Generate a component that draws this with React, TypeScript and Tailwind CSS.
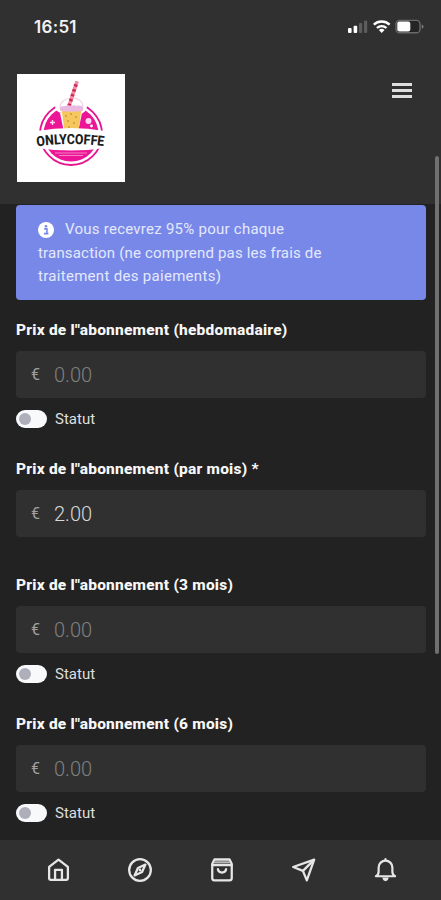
import React, { useState } from 'react';

interface Plan {
  id: string;
  label: string;
  price: string;
  hasStatus: boolean;
}

const plans: Plan[] = [
  { id: 'weekly', label: 'Prix de l"abonnement (hebdomadaire)', price: '', hasStatus: true },
  { id: 'monthly', label: 'Prix de l"abonnement (par mois) *', price: '2.00', hasStatus: false },
  { id: 'quarterly', label: 'Prix de l"abonnement (3 mois)', price: '', hasStatus: true },
  { id: 'biannually', label: 'Prix de l"abonnement (6 mois)', price: '', hasStatus: true },
];

const StatusBar: React.FC = () => (
  <div className="flex h-[54px] items-center justify-between pl-[34px] pr-[17px]">
    <span className="font-['Inter',sans-serif] text-[17px] font-semibold leading-6 tracking-[0.3px] text-[#f2f2f2]">16:51</span>
    <svg width="77" height="16" viewBox="0 0 77 16">
      <rect x="1" y="9" width="3.6" height="5" rx="1" fill="#fff" />
      <rect x="6.6" y="6.8" width="3.6" height="7.2" rx="1" fill="#fff" />
      <rect x="12" y="4" width="3.2" height="10" rx="1" fill="#5c5c5c" />
      <rect x="17" y="1.5" width="3.2" height="12.5" rx="1" fill="#5c5c5c" />
      <g fill="none" stroke="#fff" strokeWidth="2.3">
        <path d="M26.8 5.6a11.6 11.6 0 0 1 15.8 0" />
        <path d="M29.9 9a7 7 0 0 1 9.6 0" />
      </g>
      <path d="M34.7 14l-2.8-2.9a4 4 0 0 1 5.6 0z" fill="#fff" />
      <rect x="49" y="1.4" width="24" height="12.4" rx="3.6" fill="#242424" stroke="#6a6a6a" strokeWidth="1.4" />
      <rect x="50.3" y="2.6" width="13" height="10" rx="2" fill="#fff" />
      <path d="M74.8 5.5c2.2.8 2.2 3.4 0 4.2z" fill="#858585" />
    </svg>
  </div>
);

const Logo: React.FC = () => (
  <svg className="bg-white" width="108" height="108" viewBox="0 0 108 108">
    <circle cx="54" cy="60" r="31" fill="none" stroke="#e6148f" strokeWidth="1.8" />
    <circle cx="54" cy="60" r="27.5" fill="#ec1596" />
    <path d="M43 39h22l-4 19H47z" fill="#fff" />
    <circle cx="45" cy="32" r="7" fill="#fff" />
    <circle cx="62" cy="32" r="8" fill="#fff" />
    <path d="M43 33c0-10 22-14 23 0" fill="#fff" stroke="#eed3ea" strokeWidth="1.2" />
    <path d="M52 32L60 7.5" stroke="#f58ca6" strokeWidth="3.6" />
    <path d="M52 32L60 7.5" stroke="#c92b55" strokeWidth="3.6" strokeDasharray="2.3 2.8" />
    <path d="M44.5 35h20l-2.8 21H47.3z" fill="#f5c75d" />
    <path d="M42.5 34c2-3 6-1 8-3 4 2 6-1 9 1 3-1 6 0 7 2l-1 3c-7 1-15 1-22 0z" fill="#e9b9df" />
    <g fill="#ab763f">
      <circle cx="49" cy="42" r="0.8" />
      <circle cx="54" cy="40" r="0.8" />
      <circle cx="59" cy="43" r="0.8" />
      <circle cx="51" cy="47" r="0.8" />
      <circle cx="57" cy="49" r="0.8" />
      <circle cx="52" cy="53" r="0.8" />
    </g>
    <circle cx="71.5" cy="47" r="3" fill="#ffd8ef" />
    <circle cx="74.5" cy="52" r="1.4" fill="#fff" />
    <path d="M35.5 46v5M33 48.5h5" stroke="#ffd8ef" strokeWidth="1.4" />
    <path d="M20 57q34-6 68 0v17q-34 5-68 0z" fill="#fff" />
    <path d="M38 79h32M42 81.5h24" stroke="#f78cca" strokeWidth="0.9" />
    <path id="logo-arc" d="M20 72.5Q54 67.5 89 72.5" fill="none" />
    <text
      fill="#1c1c1c"
      fontFamily="Roboto, sans-serif"
      fontWeight="800"
      fontSize="14"
      textLength="67"
      lengthAdjust="spacingAndGlyphs"
    >
      <textPath href="#logo-arc">ONLYCOFFE</textPath>
    </text>
  </svg>
);

const Header: React.FC = () => (
  <header className="h-[204px] bg-[#303030]">
    <StatusBar />
    <div className="flex items-start justify-between pl-[17px] pr-[29px] pt-5">
      <Logo />
      <button type="button" aria-label="Menu" className="mt-[9px] flex w-5 flex-col gap-[3.5px]">
        <span className="h-[2.5px] w-full bg-[#dedede]" />
        <span className="h-[2.5px] w-full bg-[#dedede]" />
        <span className="h-[2.5px] w-full bg-[#dedede]" />
      </button>
    </div>
  </header>
);

const FeeNotice: React.FC = () => (
  <div className="mt-px h-[95px] rounded-[4px] bg-[#7888e8] pl-[22px] pt-[13px] text-[15px] leading-[23.6px] text-[#e4e8fc]">
    <p className="flex items-center tracking-[0.25px]">
      <svg className="mr-[11px]" width="16" height="16" viewBox="0 0 16 16">
        <circle cx="8" cy="8" r="8" fill="#fff" />
        <path d="M6.2 6.9h2.7v4.3M5.9 11.6h4.5" fill="none" stroke="#7888e8" strokeWidth="1.6" />
        <circle cx="8" cy="4.3" r="1.3" fill="#7888e8" />
      </svg>
      Vous recevrez 95% pour chaque
    </p>
    <p className="tracking-[0.18px]">transaction (ne comprend pas les frais de</p>
    <p className="tracking-[0.3px]">traitement des paiements)</p>
  </div>
);

const PlanField: React.FC<{ plan: Plan }> = ({ plan }) => {
  const [enabled, setEnabled] = useState(false);

  return (
    <div className={plan.hasStatus ? 'h-[139px]' : 'h-[116px]'}>
      <label htmlFor={plan.id} className="block whitespace-nowrap text-[15.5px] font-extrabold leading-6 tracking-[0.22px] text-[#f7f7f7]">
        {plan.label}
      </label>
      <div className="mt-[9px] flex h-[47px] items-center rounded-[4px] bg-[#303030] pl-[15px]">
        <span className="w-[23px] text-base text-[#a0a0a0]">€</span>
        <input
          id={plan.id}
          defaultValue={plan.price}
          placeholder="0.00"
          className="w-40 bg-transparent text-[20px] font-light text-[#d8d8d8] outline-none placeholder:text-[#808080]"
        />
      </div>
      {plan.hasStatus && (
        <div className="mt-[9px] flex h-6 items-center gap-2">
          <button
            type="button"
            aria-label="Statut"
            onClick={() => setEnabled(!enabled)}
            className={`flex h-[18px] w-[31px] items-center rounded-full bg-[#f8f9fb] px-[3px] ${enabled ? 'justify-end' : ''}`}
          >
            <span className="size-3 rounded-full bg-[#adb0ba]" />
          </button>
          <span className="text-[15px] text-[#dedede]">Statut</span>
        </div>
      )}
    </div>
  );
};

const BottomNav: React.FC = () => (
  <nav className="flex h-[60px] items-center justify-between bg-[#303030] pl-[46px] pr-[43px]">
    <svg width="25" height="26" viewBox="0 0 24 24" fill="none" stroke="#e6e6e6" strokeWidth="2.2" strokeLinejoin="round">
      <path d="M3 9L12 2l9 7v10.7c0 1-.8 1.8-1.8 1.8H4.8c-1 0-1.8-.8-1.8-1.8z" />
      <path d="M8.7 21.5v-9.7h6.6v9.7" />
    </svg>
    <svg width="26" height="26" viewBox="0 0 24 24" fill="none" stroke="#e6e6e6" strokeWidth="2.1" strokeLinejoin="round">
      <circle cx="12" cy="12" r="10" />
      <path d="M17 7l-3.1 6.9L7 17l3.1-6.9z" />
      <circle cx="12" cy="12" r="1.3" fill="#e6e6e6" stroke="none" />
    </svg>
    <svg width="26" height="26" viewBox="0 0 24 24" fill="none" stroke="#e6e6e6" strokeWidth="2.1" strokeLinejoin="round" strokeLinecap="round">
      <path d="M5 2.3h14l2 4.2v13.2c0 1-.8 1.8-1.8 1.8H4.8c-1 0-1.8-.8-1.8-1.8V6.5z" />
      <path d="M3.2 7.5h17.6" />
      <path d="M5.5 5h13" stroke="#b8b8b8" />
      <path d="M8.2 11.2c.6 4.2 7 4.2 7.6 0" />
    </svg>
    <svg width="26" height="26" viewBox="0 0 24 24" fill="none" stroke="#e6e6e6" strokeWidth="2.1" strokeLinejoin="round">
      <path d="M21.4 2.4L14.6 21.6l-3.6-8.8-9-3.6z" />
      <path d="M21.4 2.4L11 12.8" />
    </svg>
    <svg width="25" height="26" viewBox="0 0 24 24" fill="none" stroke="#e6e6e6" strokeWidth="2.1" strokeLinejoin="round" strokeLinecap="round">
      <path d="M2.8 18c1.8-1.1 2.6-2.4 2.6-4.4V9.6a6.6 6.6 0 0 1 13.2 0v4c0 2 .8 3.3 2.6 4.4z" />
      <path d="M12 2.5V1.5" />
      <path d="M9 19.3h6c-.3 4.6-5.700 4.600-6 0z" fill="#e6e6e6" stroke="none" />
    </svg>
  </nav>
);

export default function App() {
  return (
    <div className="relative flex h-[900px] w-[441px] flex-col overflow-hidden bg-[#222222] font-['Roboto',sans-serif]">
      <Header />
      <main className="min-h-0 flex-1 overflow-hidden pl-4 pr-[15px]">
        <FeeNotice />
        <div className="pt-[18px]">
          {plans.map(plan => (
            <PlanField key={plan.id} plan={plan} />
          ))}
        </div>
      </main>
      <BottomNav />
      <div className="absolute right-[2px] top-[156px] h-[498px] w-1 rounded-full bg-[#707070]" />
    </div>
  );
}
